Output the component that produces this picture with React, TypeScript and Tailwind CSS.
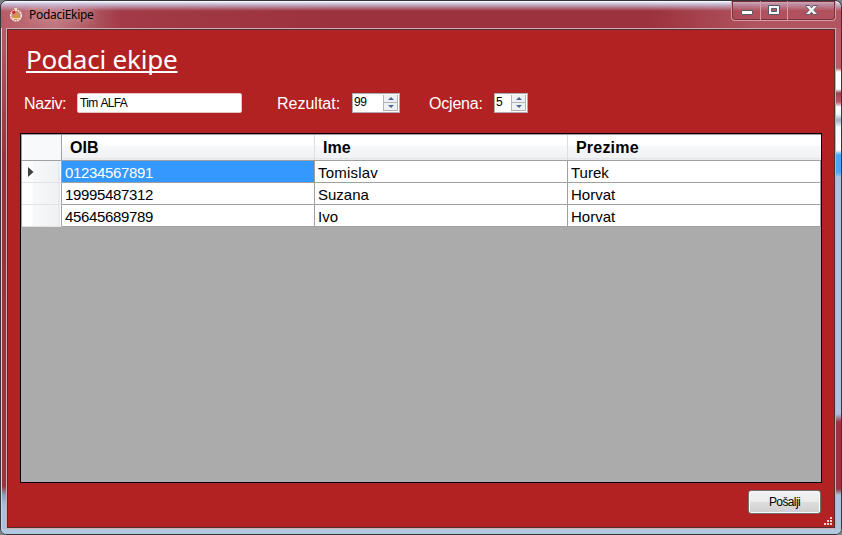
import React from "react";

const rows = [
  ["01234567891", "Tomislav", "Turek"],
  ["19995487312", "Suzana", "Horvat"],
  ["45645689789", "Ivo", "Horvat"],
];

const small = "font-['Liberation_Sans',Arial,sans-serif] text-[12px] leading-[14px] whitespace-nowrap";

function AppIcon() {
  return (
    <svg width="14" height="14" viewBox="0 0 14 14" className="shrink-0">
      <circle cx="7" cy="7.5" r="5.3" fill="#c98a78" stroke="#fbe9d8" strokeWidth="1.6" strokeDasharray="2 .6" />
      <path d="M4 10h6V8H9V6H6v2H4z" fill="#d09a3c" />
      <path d="M2.500 4.500l3-2.500 1 3-2 1z" fill="#d02828" />
      <path d="M5.500 0h2.500v2.500H5.500z" fill="#f6e3c4" />
      <path d="M3.500 10.500h7" stroke="#f4d9b0" />
    </svg>
  );
}

function Caption() {
  return (
    <div className="mr-[5px] flex h-[20px] w-[105px] rounded-b-[4px] border-x border-b border-[#d59aa3] bg-[#b04a57]/40 shadow-[inset_0_0_0_1px_#7d303b]">
      <div className="flex w-[29px] items-center justify-center border-r border-[#d59aa3] pt-[3px] pl-px">
        <svg width="12" height="5" viewBox="0 0 12 5"><rect x=".5" y=".5" width="11" height="4" rx=".5" fill="#fff" stroke="#555866" /></svg>
      </div>
      <div className="flex w-[27px] items-start justify-center border-r border-[#d59aa3] pt-[4px]">
        <svg width="12" height="10" viewBox="0 0 12 10"><path fillRule="evenodd" d="M.5.5h11v9H.5zM3.500 3.500v3h5v-3z" fill="#f8f8f8" stroke="#555866" /></svg>
      </div>
      <div className="flex flex-1 items-start justify-center pt-[4px]">
        <svg width="13" height="10" viewBox="0 0 13 10"><path d="M1 .5h3.500l2 2.300L8.500.5H12v1L8.700 5 12 8.500v1H8.500l-2-2.300-2 2.300H1v-1L4.300 5 1 1.500z" fill="#f8f8f8" stroke="#555866" /></svg>
      </div>
    </div>
  );
}

function Spinner({ value, width }: { value: string; width: string }) {
  return (
    <div className={`flex h-[20px] ${width} border border-[#abadb3] bg-white p-[1px]`}>
      <span className={`${small} flex-1 tracking-[-0.5px] text-black`}>{value}</span>
      <div className="flex w-[15px] flex-col border-l border-[#b4b4b4]">
        {[true, false].map((up) => (
          <div key={String(up)} className="flex h-[8px] flex-1 items-center justify-center border-r border-b border-[#b4b4b4] bg-[#f0f0f0]">
            <svg width="6" height="3" viewBox="0 0 6 3"><path d={up ? "M0 3l3-3 3 3z" : "M0 0l3 3 3-3z"} fill="#4a62ac" /></svg>
          </div>
        ))}
      </div>
    </div>
  );
}

export default function App() {
  const label = "font-['Liberation_Sans',Arial,sans-serif] text-[16px] leading-[22px] whitespace-nowrap text-white";
  return (
    <div className="h-[535px] w-[842px] overflow-hidden bg-[#7b8286]">
      <div className="flex h-[535px] w-[842px] flex-col rounded-[7px] border border-[#33363d] bg-[linear-gradient(180deg,#a94d58_0px,#9c323e_30px,#9a303d_155px,#9c323d_300px,#9c323d_485px,#88a0bc_494px,#a9c1dc_505px)] shadow-[inset_0_0_0_1px_#d6d5e2]">
        <header className="flex h-[27px] items-start rounded-t-[6px] bg-[linear-gradient(180deg,#fff_0px,#c9bed8_3px,transparent_10px),linear-gradient(90deg,#b65b65_0px,#c0777f_55px,#a23b47_120px,#9c323d_330px,#9c323d_650px,#b15661_760px,#b15661_842px)]">
          <div className="flex h-[27px] flex-1 items-center pl-[8px] pt-px">
            <AppIcon />
            <span className="ml-[6px] font-['Noto_Sans','Open_Sans',sans-serif] text-[12px] leading-[14px] tracking-[-0.3px] whitespace-nowrap text-black [text-shadow:0_0_8px_#fff8]">PodaciEkipe</span>
          </div>
          <Caption />
        </header>
        <div className="flex h-[501px] flex-1">
          <div className="w-[5px] shrink-0 bg-[linear-gradient(180deg,#b55c67_0px,#9c323d_125px,transparent_126px)] shadow-[inset_1px_0_0_#e5cbd2]" />
          <main className="flex h-[501px] w-[830px] flex-col border border-[#d6a9b0] bg-[#b22222] shadow-[inset_0_0_0_1px_#4c3035]">
            <h1 className="ml-[19px] mt-[12px] h-[36px] w-[152px] font-['Noto_Sans','Open_Sans',sans-serif] text-[26px] leading-[36px] font-normal tracking-[-0.2px] whitespace-nowrap text-white underline decoration-2 underline-offset-[2px] [text-decoration-skip-ink:none]">Podaci ekipe</h1>
            <div className="mt-[16px] flex h-[20px] items-start pl-[17px]">
              <span className={`${label} w-[53px] tracking-[-0.4px]`}>Naziv:</span>
              <div className="h-[20px] w-[165px] rounded-[2px] border border-[#e3c5c5] bg-white pl-[2px] pt-[2px]"><span className={`${small} block tracking-[-0.7px] [word-spacing:1px] text-black`}>Tim ALFA</span></div>
              <span className={`${label} ml-[35px] w-[75px]`}>Rezultat:</span>
              <Spinner value="99" width="w-[48px]" />
              <span className={`${label} ml-[29px] w-[65px] tracking-[-0.2px]`}>Ocjena:</span>
              <Spinner value="5" width="w-[34px]" />
            </div>
            <section className="mt-[20px] ml-[13px] h-[350px] w-[802px] border border-black bg-[#ababab] font-['Liberation_Sans',Arial,sans-serif]">
              <div className="w-[800px] border-l border-t border-[#a0a0a0]">
                <div className="flex h-[26px] border-b border-[#a0a0a0] bg-[linear-gradient(180deg,#fff_0px,#fff_10px,#f7f8fa_11px,#f1f2f4_23px,#d9dbde_24px,#fff_25px)] text-[16px] leading-[26px] font-bold text-black">
                  <div className="w-[40px] border-r border-[#a0a0a0] bg-[#f8f9fb]" />
                  <div className="w-[253px] border-r border-[#dcdee2] pl-[8px]">OIB</div>
                  <div className="w-[253px] border-r border-[#dcdee2] pl-[8px]">Ime</div>
                  <div className="w-[253px] pl-[8px] tracking-[0.2px]">Prezime</div>
                </div>
                {rows.map((row, i) => (
                  <div key={row[0]} className="flex h-[22px] text-[15px] leading-[23px] text-black">
                    <div className="flex w-[40px] items-center border-r border-b border-[#a0a0a0] border-b-[#e0e2e5] bg-[linear-gradient(90deg,#fff_0px,#fff_10px,#f7f8fa_11px,#f1f2f4_36px,#d9dbde_37px,#fff_38px)] pl-[6px]">
                      {i === 0 && <svg width="6" height="10" viewBox="0 0 6 10"><path d="M0 0l5.500 5L0 10z" fill="#404040" /></svg>}
                    </div>
                    {row.map((cell, j) => (
                      <div key={j} className={`w-[253px] border-r border-b border-[#a0a0a0] pl-[3px] ${j === 0 ? "tracking-[-0.35px]" : ""} ${i === 0 && j === 1 ? "tracking-[0.2px]" : ""} ${i === 0 && j === 0 ? "bg-[#3399ff] text-white" : "bg-white"}`}>{cell}</div>
                    ))}
                  </div>
                ))}
              </div>
            </section>
            <footer className="mt-[7px] flex h-[37px] items-start justify-end">
              <button className={`${small} mr-[3px] h-[24px] w-[73px] rounded-[3px] border border-[#707070] bg-[linear-gradient(180deg,#f2f2f2_0%,#ebebeb_48%,#dddddd_52%,#cfcfcf_100%)] tracking-[-0.6px] text-black shadow-[inset_0_0_0_1px_#fafafa]`}>Pošalji</button>
              <svg width="9" height="9" viewBox="0 0 9 9" className="mr-[2px] mt-[27px] shrink-0 fill-[#ead6d6]"><path d="M6 0h2v2H6zM3 3h2v2H3zM6 3h2v2H6zM0 6h2v2H0zM3 6h2v2H3zM6 6h2v2H6z" /></svg>
            </footer>
          </main>
          <div className="w-[5px] shrink-0 bg-[linear-gradient(180deg,#b55c67_0px,#b55c67_40px,#fff_44px,#fff_61px,#9c3f4c_65px,#b55c67_74px,#fff_79px,#f0faff_86px,#9fb0c0_92px,#f0faff_99px,#fff_122px,#4da5f5_127px,#4da5f5_144px,#adc3da_149px,#adc3da_386px,#9c323d_394px,#9c323d_461px,#adc3da_467px)]" />
        </div>
        <div className="h-[5px] rounded-b-[6px] bg-[#b2c8df]" />
      </div>
    </div>
  );
}
